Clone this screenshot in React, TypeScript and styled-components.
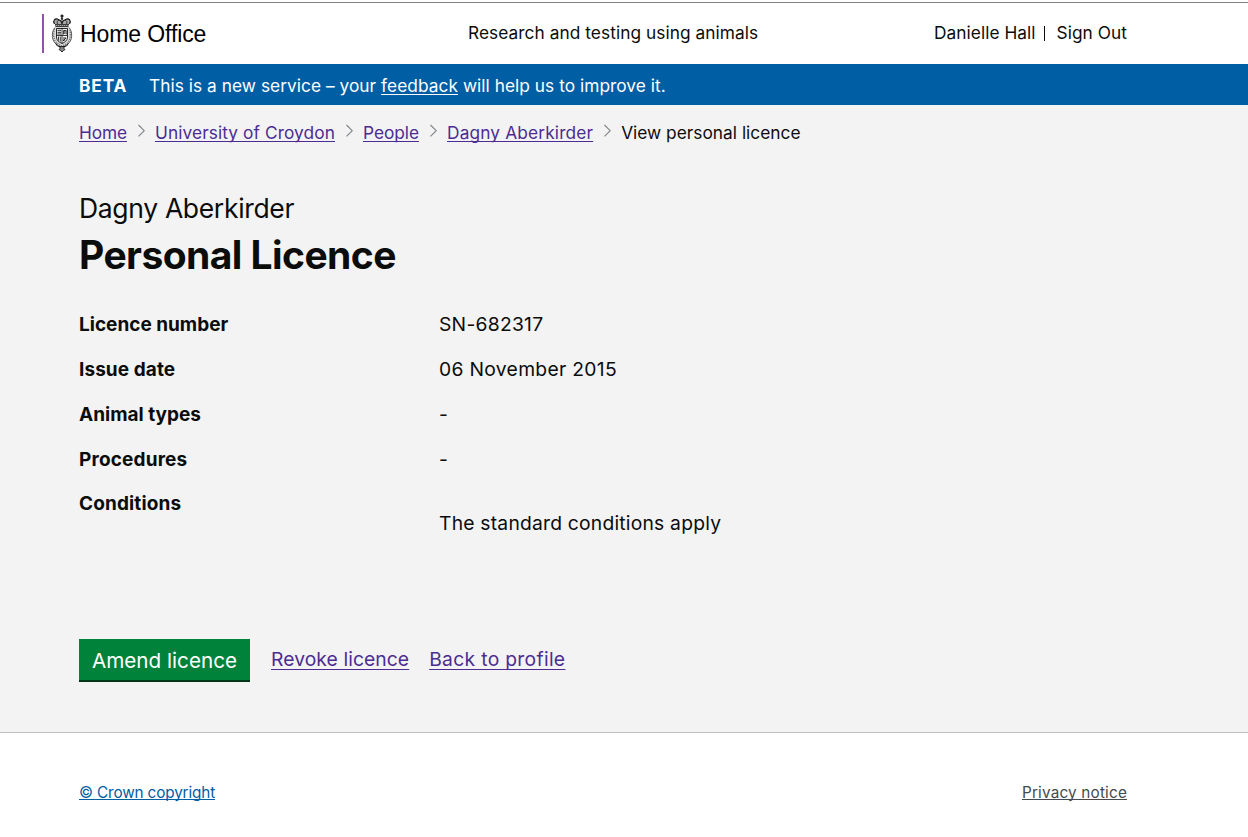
import React from "react";
import styled, { createGlobalStyle } from "styled-components";

const GlobalStyle = createGlobalStyle`
  * { box-sizing: border-box; }
  body {
    margin: 0;
    background: #fff;
    color: #0b0c0c;
    font-family: Inter, "Liberation Sans", sans-serif;
    font-size: 17.3px;
    line-height: 20px;
  }
`;

const Text = styled.span<{ $track?: number }>`
  letter-spacing: ${(p) => p.$track ?? 0}px;
  white-space: nowrap;
`;

const Link = styled.a<{ $track?: number; $color?: string; $offset?: number }>`
  color: ${(p) => p.$color ?? "#4c2c92"};
  letter-spacing: ${(p) => p.$track ?? 0}px;
  text-decoration: underline;
  text-decoration-thickness: 1px;
  text-decoration-skip-ink: none;
  text-underline-offset: ${(p) => p.$offset ?? 2}px;
  white-space: nowrap;
`;

const Header = styled.header`
  display: grid;
  grid-template-columns: 426px 1fr auto;
  align-items: center;
  height: 62px;
  margin-top: 2px;
  padding: 0 121px 2px 42px;
  border-top: 1px solid #808080;
`;

const Brand = styled.a`
  display: flex;
  align-items: center;
  height: 39px;
  margin-top: 2px;
  padding-left: 7px;
  border-left: 2px solid #9153a8;
  color: #000;
  font-family: "Liberation Sans", sans-serif;
  font-size: 23px;
  letter-spacing: -0.1px;
  white-space: nowrap;
`;

const BrandName = styled.span`
  margin-left: 7px;
`;

const User = styled.div`
  display: flex;
`;

const Divider = styled.span`
  width: 1px;
  height: 15px;
  margin: 3px 11px 0 9px;
  background: #0b0c0c;
`;

const Banner = styled.div`
  display: flex;
  align-items: center;
  height: 41px;
  padding: 3px 79px 0;
  background: #005ea5;
  color: #fff;
`;

const Phase = styled.strong`
  width: 70px;
  font-weight: 700;
  letter-spacing: 0.85px;
`;

const Main = styled.main`
  height: 628px;
  padding: 18px 79px 0;
  background: #f3f3f3;
  border-bottom: 1px solid #bfc1c3;
`;

const Breadcrumbs = styled.nav`
  display: flex;
  height: 20px;
`;

const Separator = styled.svg`
  width: 8px;
  height: 14px;
  margin: 1px 10px 0 10px;
  fill: none;
  stroke: #808689;
  stroke-width: 1.15;
`;

const Caption = styled.h2`
  margin: 49px 0 0;
  font-size: 26.5px;
  font-weight: 400;
  line-height: 32px;
  letter-spacing: -0.33px;
`;

const Title = styled.h1`
  margin: 9px 0 0;
  font-size: 39px;
  font-weight: 700;
  line-height: 44px;
  letter-spacing: -0.56px;
`;

const Details = styled.dl`
  display: grid;
  grid-template-columns: 360px 1fr;
  grid-template-rows: repeat(3, 45px) 44px auto;
  margin: 35px 0 0;
  font-size: 19px;
  line-height: 26px;
`;

const Label = styled.dt`
  font-weight: 700;
`;

const Value = styled.dd<{ $drop?: boolean }>`
  margin: 0;
  padding-top: ${(p) => (p.$drop ? 20 : 0)}px;
  font-size: 19.3px;
  line-height: 24px;
`;

const Actions = styled.div`
  display: flex;
  margin-top: 104px;
  font-size: 19.3px;
  line-height: 40px;
`;

const Button = styled.button`
  width: 171px;
  height: 43px;
  margin-right: 21px;
  padding: 2px 0 0;
  border: 0;
  border-bottom: 2px solid #003618;
  background: #00823b;
  color: #fff;
  font-family: inherit;
  font-size: 20.7px;
  letter-spacing: 0;
`;

const ActionLink = styled(Link)`
  margin-right: 20px;
`;

const Footer = styled.footer`
  display: flex;
  justify-content: space-between;
  padding: 50px 121px 0 79px;
  font-size: 15.3px;
`;

const Crest = () => (
  <svg width="22" height="39" viewBox="0 0 22 39" fill="none" stroke="#111" aria-hidden="true">
    <path d="M11 .5v4M9.5 2h3" strokeWidth="1.3" />
    <circle cx="11" cy="4.7" r="1.2" fill="#333" stroke="none" />
    <path d="M3.500 10C1.500 6.500 4 4.200 7 5.200 9 5.800 10.300 7 11 9c.7-2 2-3.200 4-3.800 3-1 5.500 1.300 3.500 4.800" fill="#aaa" strokeWidth="1.1" />
    <path d="M6.500 10C5.500 7.800 6.500 6.300 8 6M15.500 10c1-2.200 0-3.700-1.500-4M11 6v4" strokeWidth=".8" />
    <path d="M4 10.700h14M4.500 12.700h13" strokeWidth="1" />
    <path d="M4.300 11.700h13.400" strokeWidth="1" strokeDasharray="1 1" />
    <path d="M4 13.500C1.800 16 1.200 19 1.400 22.500 1.700 27.500 5 31.500 11 33c6-1.500 9.300-5.500 9.600-10.500.2-3.500-.3-6.500-2.600-9" fill="#ddd" strokeWidth=".8" stroke="#333" />
    <path d="M3.500 15C2.300 18 2.300 24 4.200 27c1.600 2.500 4 4 6.800 5 2.800-1 5.200-2.500 6.800-5 1.900-3 1.900-9 .7-12" strokeWidth="1.500" stroke="#777" strokeDasharray="1.200 1" />
    <path d="M5.500 14.500h11v8.500c0 3.400-2.500 5.200-5.500 6.500-3-1.300-5.500-3.100-5.500-6.500Z" fill="#f4f4f4" strokeWidth=".9" />
    <path d="M11 14.500v15M5.500 21.500h11" strokeWidth=".8" />
    <path d="M6.500 16.300h3.500M6.500 18.300h3.500M6.500 20h3.500M12 27l3-3M12 24h3M12 26h2" strokeWidth=".9" />
    <path d="M12.500 20.500v-4h2.700v4M13.800 16v4M7.500 22.500v4M9.300 22.500v5" strokeWidth=".8" />
    <path d="M5 29.500c.5 2.500 2.200 3 4 3.200M17 29.500c-.5 2.500-2.200 3-4 3.200" strokeWidth="1" />
    <path d="M9 32.500h4v2l1 1-1.500 1L11 38l-1.500-1.500L8 35.500l1-1Z" fill="#888" strokeWidth=".9" />
  </svg>
);

const Chevron = () => (
  <Separator viewBox="0 0 8 14" aria-hidden="true">
    <path d="M1.500 1 7.200 6.700 1.500 12.400" />
  </Separator>
);

const trail: [string, number][] = [
  ["Home", -0.11],
  ["University of Croydon", 0.09],
  ["People", -0.03],
  ["Dagny Aberkirder", 0.15],
];

const details: [string, string, number, number][] = [
  ["Licence number", "SN-682317", 0, 0.25],
  ["Issue date", "06 November 2015", 0.08, 0.31],
  ["Animal types", "-", 0, 0],
  ["Procedures", "-", 0.16, 0],
  ["Conditions", "The standard conditions apply", 0.13, 0.21],
];

export default function App() {
  return (
    <>
      <GlobalStyle />
      <Header>
        <Brand>
          <Crest />
          <BrandName>Home Office</BrandName>
        </Brand>
        <Text $track={0.06}>Research and testing using animals</Text>
        <User>
          <Text $track={0.04}>Danielle Hall</Text>
          <Divider />
          <Text $track={0.06}>Sign Out</Text>
        </User>
      </Header>
      <Banner>
        <Phase>BETA</Phase>
        <Text $track={0.045}>
          This is a new service – your{" "}
          <Link $color="#fff" $track={0.06}>feedback</Link> will help us to improve it.
        </Text>
      </Banner>
      <Main>
        <Breadcrumbs>
          {trail.map(([name, track]) => (
            <React.Fragment key={name}>
              <Link $track={track}>{name}</Link>
              <Chevron />
            </React.Fragment>
          ))}
          <Text $track={0.02}>View personal licence</Text>
        </Breadcrumbs>
        <Caption>Dagny Aberkirder</Caption>
        <Title>Personal Licence</Title>
        <Details>
          {details.map(([label, value, labelTrack, valueTrack]) => (
            <React.Fragment key={label}>
              <Label><Text $track={labelTrack}>{label}</Text></Label>
              <Value $drop={label === "Conditions"}>
                <Text $track={valueTrack}>{value}</Text>
              </Value>
            </React.Fragment>
          ))}
        </Details>
        <Actions>
          <Button>Amend licence</Button>
          <ActionLink $track={0.08} $offset={3}>Revoke licence</ActionLink>
          <ActionLink $track={0.31} $offset={3}>Back to profile</ActionLink>
        </Actions>
      </Main>
      <Footer>
        <Link $color="#005ea5" $offset={1} $track={-0.14}>© Crown copyright</Link>
        <Link $color="#454a4d" $offset={1} $track={0.18}>Privacy notice</Link>
      </Footer>
    </>
  );
}
